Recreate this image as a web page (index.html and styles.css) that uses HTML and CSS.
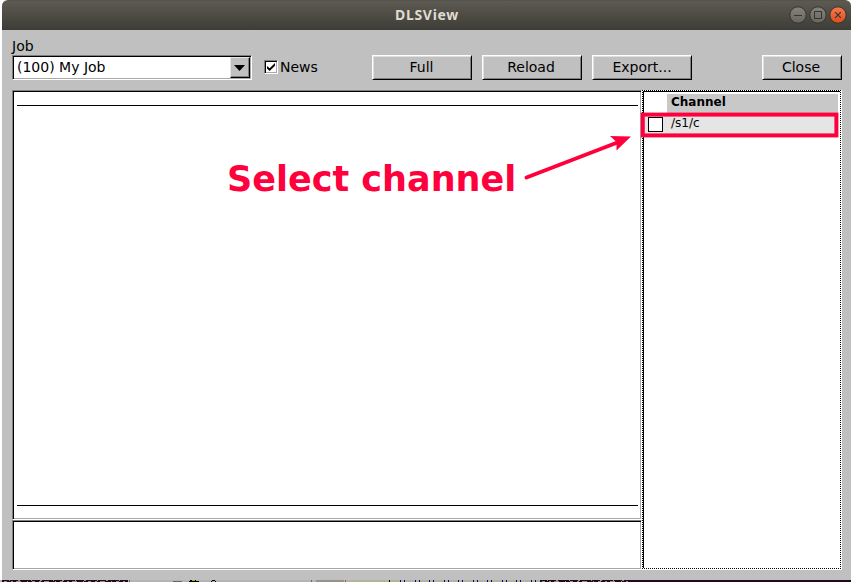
FILE: index.html
```html
<!DOCTYPE html>
<html lang="en">
<head>
<meta charset="utf-8">
<title>DLSView</title>
<link rel="stylesheet" href="styles.css">
</head>
<body>
<div class="window">
  <header class="titlebar">
    <span class="title">DLSView</span>
    <svg class="controls" width="58" height="18" viewBox="0 0 58 18">
      <defs>
        <linearGradient id="grey" x1="0" y1="0" x2="0" y2="1"><stop offset="0" stop-color="#85837c"/><stop offset="1" stop-color="#67655e"/></linearGradient>
        <linearGradient id="orange" x1="0" y1="0" x2="0" y2="1"><stop offset="0" stop-color="#f57b51"/><stop offset="1" stop-color="#de4c19"/></linearGradient>
      </defs>
      <g stroke="#35342f">
        <circle cx="9" cy="9" r="8.2" fill="url(#grey)"/>
        <circle cx="29" cy="9" r="8.2" fill="url(#grey)"/>
        <circle cx="49" cy="9" r="8.2" fill="url(#orange)"/>
        <path d="M5 9.5h8M25.5 5.5h7v7h-7z" fill="none"/>
        <path d="M46.2 6.2l5.6 5.6M51.8 6.2l-5.6 5.6" fill="none" stroke-width="1.2"/>
      </g>
    </svg>
  </header>
  <main class="content">
    <div class="job-label">Job</div>
    <div class="toolbar">
      <div class="combo sunken"><span class="combo-text">(100) My Job</span><span class="combo-button"><svg width="11" height="6" viewBox="0 0 11 6"><path d="M0 0h11L5.5 6z"/></svg></span></div>
      <label class="news"><span class="check sunken"><svg width="8" height="8" viewBox="0 0 8 8"><path d="M0 3l2.6 2.2L8 0v2.8L2.6 8 0 5.6z"/></svg></span>News</label>
      <button class="button full">Full</button>
      <button class="button reload">Reload</button>
      <button class="button export">Export...</button>
      <button class="button close">Close</button>
    </div>
    <div class="panes">
      <div class="left">
        <section class="plot sunken"><div class="plot-area"></div></section>
        <section class="detail sunken"></section>
      </div>
      <section class="channels">
        <div class="list">
          <div class="list-head">Channel</div>
          <div class="list-row"><span class="box"></span><span>/s1/c</span></div>
        </div>
      </section>
    </div>
  </main>
  <div class="desktop-strip">
    <svg width="851" height="2" viewBox="0 0 851 2" shape-rendering="crispEdges">
      <path fill="#b4b4b4" d="M0 0h851v2H0z"/>
      <path fill="#24081d" d="M2 0h126v2H2zM540 0h311v2H540z"/>
      <path stroke="#8b9095" stroke-width="1" stroke-dasharray="3 4 2 3 5 6 1 4" d="M4 1.5h122M542 1.5h86"/>
      <path stroke="#b18a72" stroke-width="1" stroke-dasharray="1 8 2 11" d="M9 .5h115M547 .5h80"/>
      <path fill="#666" d="M129 0h1v2h-1zM173 1h9v1h-9zM311 0h1v2h-1z"/>
      <path fill="#000" d="M190 0h6v1h-6zM189 1h10v1h-10zM212 0h3v1h-3zM211 1h1v1h-1zM215 1h1v1h-1z"/>
      <path fill="#bdb700" d="M192 0h3v1h-3z"/>
      <path fill="#97918b" d="M316 0h28v2h-28z"/>
      <path fill="#b4b49c" d="M346 0h194v2H346z"/>
      <path fill="#b6553b" d="M345 0h1v2h-1z"/>
      <path fill="#000" d="M389 0h1v2h-1z"/>
      <path fill="#0000b0" d="M400 0h1v2h-1zM404 0h1v2h-1zM415 0h1v2h-1zM419 0h1v2h-1zM429 0h1v2h-1zM433 0h1v2h-1zM444 0h1v2h-1zM448 0h1v2h-1zM458 0h1v2h-1zM462 0h1v2h-1zM473 0h1v2h-1zM477 0h1v2h-1zM487 0h1v2h-1zM491 0h1v2h-1zM502 0h1v2h-1zM506 0h1v2h-1zM516 0h1v2h-1zM520 0h1v2h-1zM531 0h1v2h-1zM535 0h1v2h-1z"/>
    </svg>
  </div>
</div>
<div class="callout">Select channel</div>
<svg class="annotation" width="851" height="582" viewBox="0 0 851 582">
  <rect x="642.8" y="114.6" width="193.6" height="20.8" fill="none" stroke="#ff003c" stroke-width="4"/>
  <path d="M526.5 177.5L620 141.5" stroke="#ff003c" stroke-width="4" stroke-linecap="round"/>
  <path d="M631 136.5L610 136l6.5 6 0 8.5z" fill="#ff003c"/>
</svg>
</body>
</html>
```
FILE: styles.css
```css
* { box-sizing: border-box; }
body {
  margin: 0;
  width: 851px;
  height: 582px;
  overflow: hidden;
  background: #fff;
  color: #000;
  font: 14px/16px "DejaVu Sans", sans-serif;
}
.window { display: flex; flex-direction: column; height: 582px; }
.titlebar {
  display: grid;
  grid-template-columns: 1fr auto 1fr;
  align-items: center;
  height: 30px;
  margin-left: 2px;
  padding-right: 4px;
  border-top: 1px solid #55534b;
  border-radius: 6px 6px 0 0;
  background: linear-gradient(#5d5a52, #3d3c36);
}
.title {
  grid-column: 2;
  padding: 0 0 2px 5px;
  color: #dfdbd2;
  font: bold 14px/18px "Noto Sans", sans-serif;
  letter-spacing: 0.7px;
}
.controls { justify-self: end; margin-top: -1px; }
.content {
  display: flex;
  flex-direction: column;
  height: 550px;
  margin-left: 2px;
  padding: 8px 9px 10px 10px;
  background: #c0c0c0;
}
.job-label { height: 16px; margin-bottom: 1px; }
.toolbar { display: flex; height: 25px; margin-bottom: 10px; }
.sunken {
  border: 1px solid;
  border-color: #808080 #fff #fff #808080;
  box-shadow: inset 1px 1px #000, inset -1px -1px #a8a8a8;
  background: #fff;
}
.combo { display: flex; width: 240px; padding: 1px; }
.combo-text { flex: 1; padding: 2px 0 0 3px; }
.combo-button {
  display: grid;
  place-items: center;
  width: 20px;
  padding-right: 1px;
  border: 1px solid;
  border-color: #e5e5e5 #000 #000 #e5e5e5;
  box-shadow: inset -1px -1px #808080;
  background: #c0c0c0;
}
.news { display: flex; align-items: center; gap: 2px; width: 108px; height: 24px; margin-left: 12px; }
.check { display: grid; place-items: center; width: 14px; height: 14px; }
.button {
  width: 100px;
  height: 25px;
  margin: 0 10px 0 0;
  padding: 0 1px 1px 0;
  border: 1px solid;
  border-color: #fff #000 #000 #fff;
  box-shadow: inset 1px 1px #dedede, inset -1px -1px #808080;
  background: #c0c0c0;
  color: #000;
  font: inherit;
}
.reload { padding: 0 2px 1px 0; }
.export { padding: 0 0 1px; }
.close { width: 80px; margin: 0 0 0 auto; padding: 0 2px 1px 0; }
.panes { display: flex; height: 480px; }
.left { display: flex; flex-direction: column; width: 630px; }
.plot { height: 430px; padding: 14px 3px 13px 4px; }
.plot-area { height: 401px; border: solid #000; border-width: 1px 0; }
.detail { height: 50px; }
.channels {
  width: 200px;
  padding: 1px 2px 2px 1px;
  background:
    repeating-linear-gradient(90deg, #000 0 1px, #fff 1px 2px) 0 0 / 199px 1px no-repeat,
    repeating-linear-gradient(90deg, #000 0 1px, #fff 1px 2px) 0 478px / 199px 1px no-repeat,
    repeating-linear-gradient(#000 0 1px, #fff 1px 2px) 0 0 / 1px 479px no-repeat,
    repeating-linear-gradient(#000 0 1px, #fff 1px 2px) 198px 0 / 1px 479px no-repeat,
    #fff;
}
.list {
  height: 477px;
  padding: 2px 2px 0 1px;
  border: solid #000;
  border-width: 1px 0 0 1px;
  font-size: 12px;
}
.list-head {
  height: 19px;
  margin-left: 22px;
  padding: 1px 0 0 4px;
  background: #c8c8c8;
  font-weight: bold;
  line-height: 15px;
}
.list-row {
  display: flex;
  gap: 8px;
  height: 23px;
  padding: 4px 0 0 3px;
  background: #e5e5e5;
  line-height: 13px;
}
.box { width: 15px; height: 15px; border: 1px solid #000; background: #fff; }
.desktop-strip { height: 2px; }
.desktop-strip svg { display: block; }
.callout {
  position: absolute;
  left: 227px;
  top: 157px;
  color: #ff003c;
  font: bold 35px/44px "DejaVu Sans", sans-serif;
  white-space: nowrap;
}
.annotation { position: absolute; left: 0; top: 0; pointer-events: none; }
```
